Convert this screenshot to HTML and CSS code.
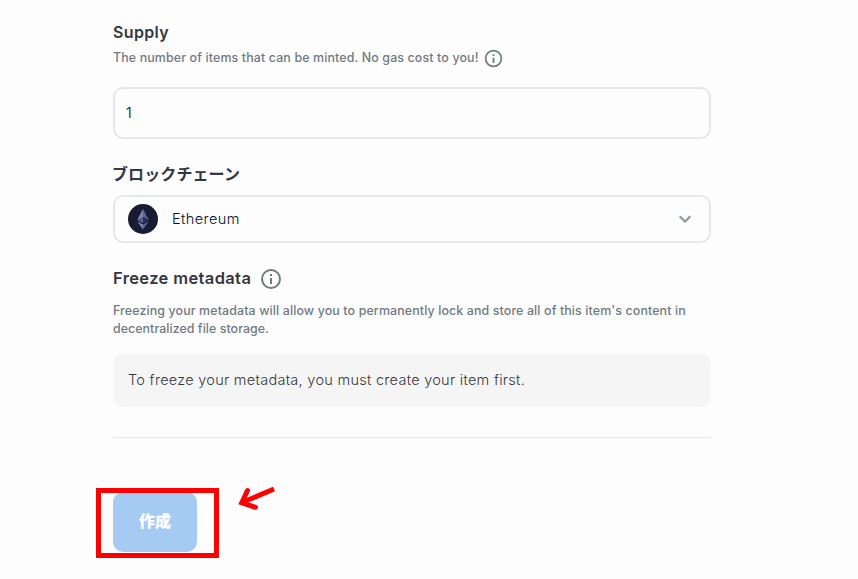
FILE: index.html
```
<!DOCTYPE html>
<html lang="ja">
    <head>
        <meta charset="UTF-8">
        <title>Create New Item</title>
        <link rel="stylesheet" href="styles.css">
    </head>
    <body>
        <form class="form">
            <div class="field supply">
                <label class="title" for="supply"><span class="t-supply">Supply</span></label>
                <div class="help">
                    <span class="t-help">The number of items that can be minted. No gas cost to you!</span>
                    <svg class="info small" viewBox="0 0 24 24"><path d="M11 7h2v2h-2zM11 11h2v6h-2zM12 2a10 10 0 1 0 0 20 10 10 0 0 0 0-20zm0 18a8 8 0 1 1 0-16 8 8 0 0 1 0 16z"/></svg>
                </div>
                <input class="input" id="supply" type="text" value="1">
            </div>

            <div class="field chain">
                <div class="title jp">ブロックチェーン</div>
                <div class="select">
                    <svg class="eth" viewBox="0 0 30 30">
                        <circle cx="15" cy="15" r="15" fill="#171c32"/>
                        <path d="M15 5v8.200l-5.900 2.700z" fill="#8284b0"/>
                        <path d="M15 5v8.200l5.900 2.700z" fill="#5e6094"/>
                        <path d="M15 13.200v6.100l-5.900-3.400z" fill="#5b5e91"/>
                        <path d="M15 13.200v6.100l5.900-3.400z" fill="#2c3059"/>
                        <path d="M15 20.600v4.900l-5.900-8.300z" fill="#8183af"/>
                        <path d="M15 20.600v4.900l5.900-8.300z" fill="#5b5d91"/>
                    </svg>
                    <span class="name">Ethereum</span>
                    <svg class="arrow" viewBox="0 0 24 24"><path d="M7.410 8.590L12 13.170l4.590-4.580L18 10l-6 6-6-6z"/></svg>
                </div>
            </div>

            <div class="field freeze">
                <div class="title">
                    <span class="t-freeze">Freeze metadata</span>
                    <svg class="info" viewBox="0 0 24 24"><path d="M11 7h2v2h-2zM11 11h2v6h-2zM12 2a10 10 0 1 0 0 20 10 10 0 0 0 0-20zm0 18a8 8 0 1 1 0-16 8 8 0 0 1 0 16z"/></svg>
                </div>
                <p class="desc"><span class="d1">Freezing your metadata will allow you to permanently lock and store all of this item's content in</span><br><span class="d2">decentralized file storage.</span></p>
                <div class="notice"><span class="t-notice">To freeze your metadata, you must create your item first.</span></div>
            </div>

            <div class="submit">
                <button class="btn" type="button">作成</button>
                <div class="mark"></div>
                <svg class="pointer" viewBox="0 0 40 28"><path d="M37 4L5 17.500" stroke-linecap="butt"/><path d="M10.500 5.500L4.800 17.800L18.500 22.300" stroke-linecap="round"/></svg>
            </div>
        </form>
    </body>
</html>
```
FILE: styles.css
```
*{ margin:0; padding:0; box-sizing:border-box;}
body{
    min-height: 579px;
    background: #fdfdfd;
    color: #353840;
    font-family: Inter,"Noto Sans CJK JP",sans-serif;
}
.form{
    width: 598px;
    margin-left: 113px;
    padding-top: 20px;
}
.title{
    display: flex;
    align-items: center;
    height: 26px;
    padding-bottom: 2px;
    font-size: 16px;
    font-weight: 600;
    white-space: nowrap;
}
.freeze .title{
    padding-bottom: 0;
}
.t-supply{
    letter-spacing: .35px;
}
.t-freeze{
    padding-bottom: 2px;
    font-size: 16.5px;
    letter-spacing: .36px;
}
.jp{
    margin-left: -1px;
    letter-spacing: .1px;
}
.help{
    display: flex;
    align-items: center;
    height: 24px;
    font-size: 12.4px;
    font-weight: 500;
    color: #707a83;
    white-space: nowrap;
}
.t-help{
    padding-bottom: 1px;
    letter-spacing: .14px;
}
.info{
    width: 24px;
    height: 24px;
    margin-left: 8px;
    fill: #707a83;
}
.info.small{
    width: 21px;
    height: 21px;
    margin: 1px 0 0 4px;
}
.input{
    display: block;
    width: 598px;
    height: 52px;
    margin-top: 17px;
    padding: 0 12px 1px 11px;
    border: 2px solid #e5e8eb;
    border-radius: 10px;
    background: #fdfdfd;
    color: #353840;
    font-family: inherit;
    font-size: 14px;
    outline: none;
}
.chain{
    margin-top: 22px;
}
.select{
    display: flex;
    align-items: center;
    height: 48px;
    margin-top: 8px;
    padding: 0 12px 0 13px;
    border: 2px solid #e5e8eb;
    border-radius: 10px;
}
.eth{
    width: 30px;
    height: 30px;
}
.name{
    margin-left: 14px;
    padding-bottom: 1px;
    font-size: 14.5px;
    font-weight: 300;
    letter-spacing: .43px;
    color: #04111d;
}
.arrow{
    width: 24px;
    height: 24px;
    margin-left: auto;
    fill: #8a939b;
}
.freeze{
    margin-top: 23px;
}
.desc{
    margin-top: 10px;
    font-size: 12.4px;
    font-weight: 500;
    line-height: 18px;
    letter-spacing: .13px;
    color: #707a83;
    white-space: nowrap;
}
.d2{
    letter-spacing: .06px;
}
.notice{
    display: flex;
    align-items: center;
    height: 53px;
    margin-top: 16px;
    padding: 0 0 2px 15px;
    border-radius: 10px;
    background: #f5f5f5;
    font-size: 14.5px;
    font-weight: 300;
    letter-spacing: .28px;
    white-space: nowrap;
}
.submit{
    position: relative;
    margin-top: 30px;
    padding-top: 54px;
    border-top: 1px solid #e5e8eb;
}
.btn{
    display: block;
    width: 84px;
    height: 60px;
    padding-bottom: 4px;
    border: 0;
    border-radius: 10px;
    background: #a6cbf3;
    color: #fff;
    font-family: "Noto Sans CJK JP",sans-serif;
    font-size: 16px;
    font-weight: 900;
}
/* red frame over the button */
.mark{
    position: absolute;
    left: -17px;
    top: 50px;
    width: 123px;
    height: 70px;
    border: 5px solid #fe0000;
}
.pointer{
    position: absolute;
    left: 124px;
    top: 47px;
    width: 40px;
    height: 28px;
    fill: none;
    stroke: #fe0000;
    stroke-width: 5;
}
```
